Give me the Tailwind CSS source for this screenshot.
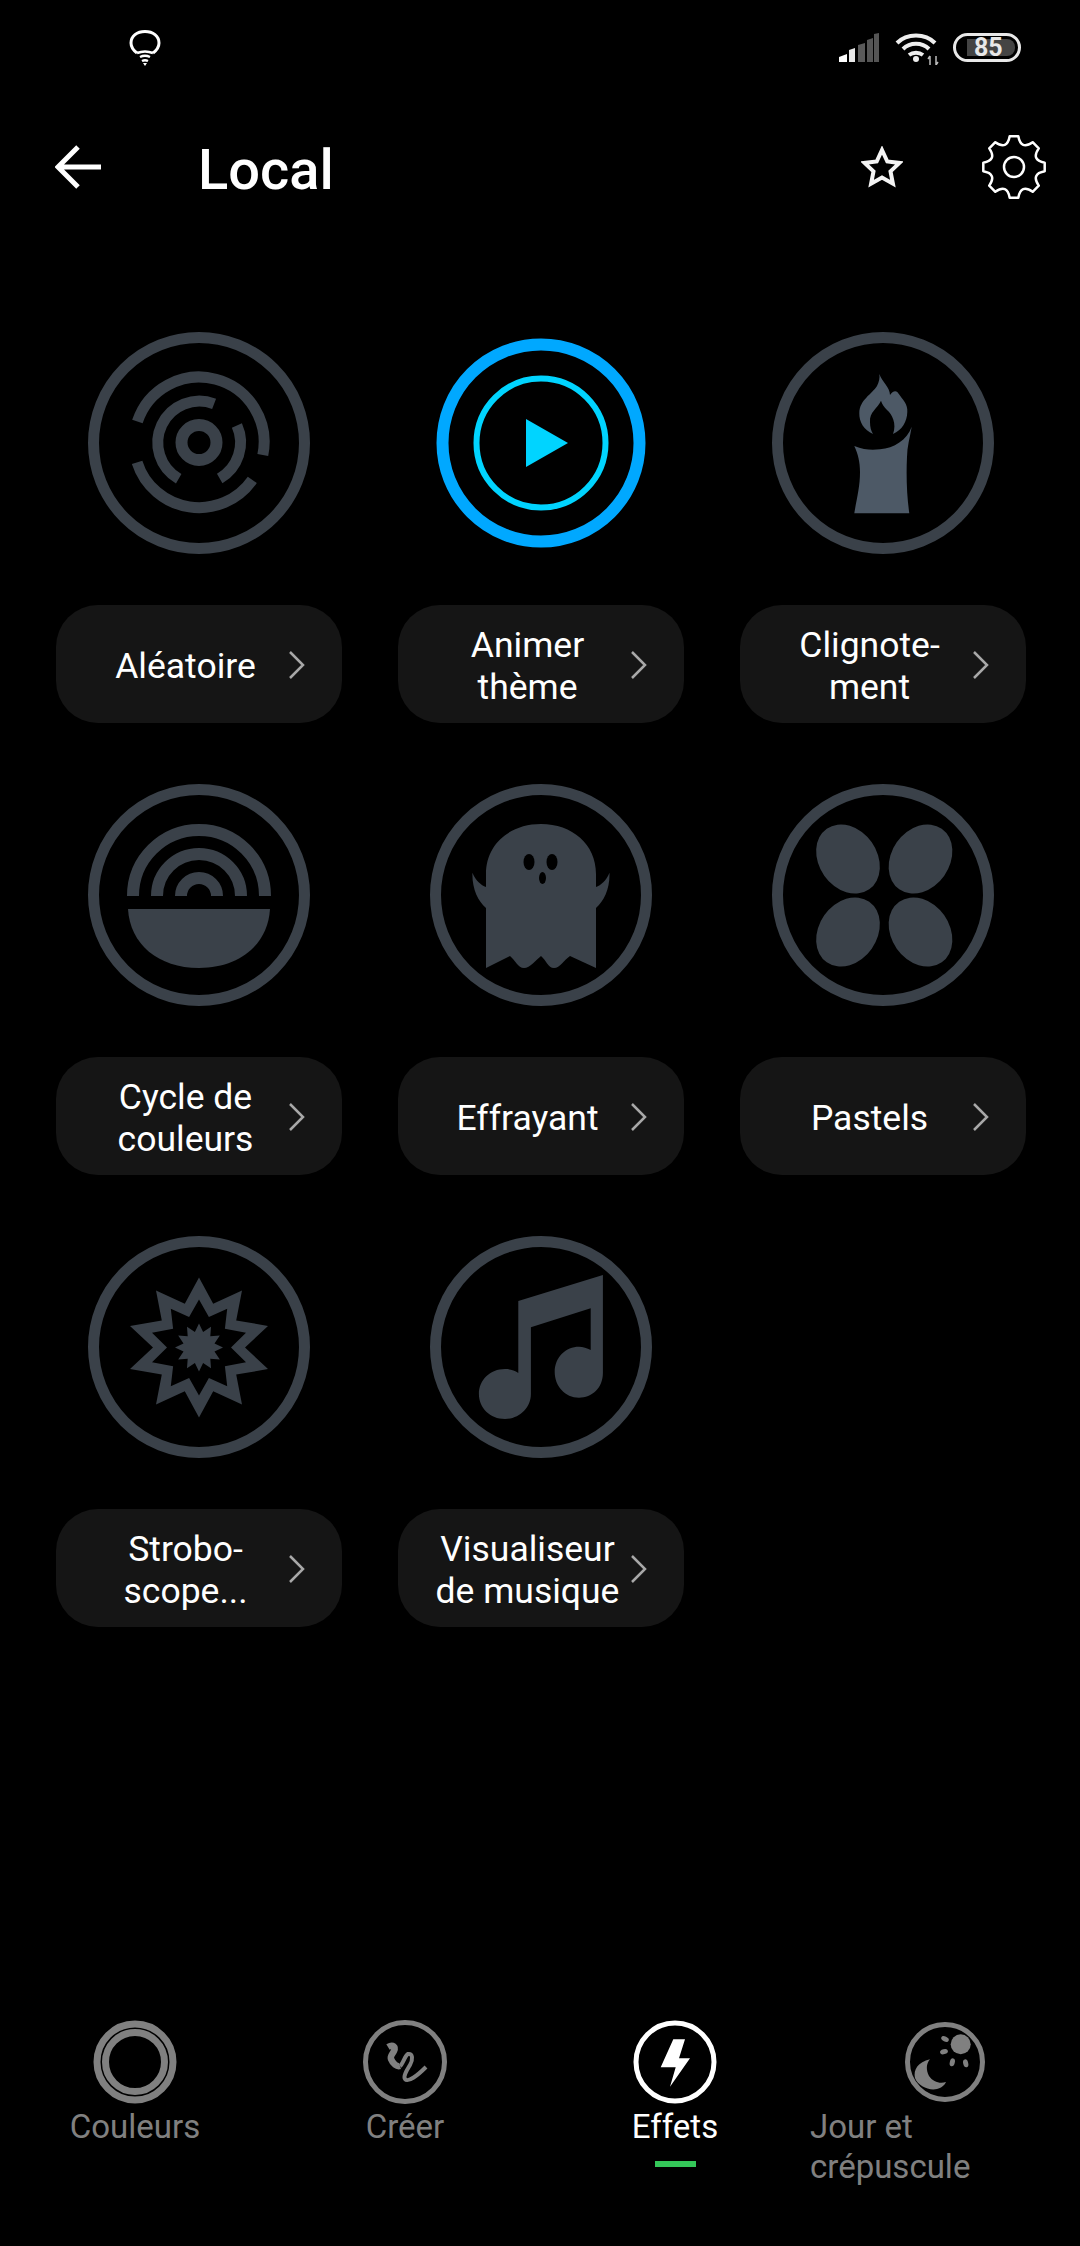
<!DOCTYPE html>
<html lang="fr">
<head>
  <meta charset="UTF-8">
  <meta name="viewport" content="width=device-width, initial-scale=1.0">
  <title>Local</title>
  <script src="https://cdn.jsdelivr.net/npm/@tailwindcss/browser@4"></script>
</head>
<body class="bg-black font-['Roboto',sans-serif] text-white">
  <div class="relative h-[2246px] w-[1080px] overflow-hidden bg-black">

    <!-- status bar -->
    <div class="flex h-[96px] items-start justify-between pl-[129px] pr-[59px] pt-[30px]">
      <svg class="h-[36px] w-[32px]" viewBox="0 0 32 36" fill="none" stroke="#fff">
        <path d="M8 23C4 20 2 17 2 13 2 6 8 1.500 16 1.500S30 6 30 13c0 4-2 7-6 10" stroke-width="3"/>
        <path d="M8 23c5-2 11-2 16 0M11 27c3-1.500 7-1.500 10 0M13 31c2-1 4-1 6 0" stroke-width="2.500"/>
        <path d="M16 33l-2 0 2 3 2-3z" fill="#fff" stroke="none"/>
      </svg>
      <div class="mt-[3px] flex items-start">
        <svg class="h-[29px] w-[42px]" viewBox="0 0 42 29">
          <path d="M0 29v-5l8-3v8z" fill="#fff"/>
          <path d="M10 29V17l6-2v14z" fill="#e8e8e8"/>
          <path d="M19 29V12l7-2v19z" fill="#5a5a5a"/>
          <path d="M28 29V7l6-2v24z" fill="#555"/>
          <path d="M35 29V1l5-1v29z" fill="#555"/>
        </svg>
        <svg class="ml-[14px] h-[32px] w-[44px]" viewBox="0 0 44 32" fill="none" stroke="#eee" stroke-width="4">
          <path d="M2 10C12 0 30 0 40 10"/>
          <path d="M8 16C15 9 27 9 34 16"/>
          <path d="M14 22c4-3 10-3 14 0"/>
          <circle cx="21" cy="26" r="3" fill="#eee" stroke="none"/>
          <path d="M35 23v9M35 23l-2 3M41 23v9M41 32l2-3" stroke="#bbb" stroke-width="1.500"/>
        </svg>
        <div class="ml-[14px] flex h-[29px] w-[68px] items-center rounded-full border-[3px] border-[#e8e8e8] py-[3px] pl-[11px] pr-[3px]">
          <div class="h-full w-full rounded-r-[8px] bg-[#444] pl-[7px] text-[25px] leading-[17px] font-bold text-[#e8e8e8]">85</div>
        </div>
      </div>
    </div>

    <!-- app bar -->
    <div class="flex h-[142px] items-center">
      <svg class="ml-[55px] h-[44px] w-[46px]" viewBox="0 0 46 44" fill="none" stroke="#fff" stroke-width="5">
        <path d="M23 2L3 22l20 20M3 22h43"/>
      </svg>
      <h1 class="ml-[97px] mt-[6px] text-[56px] leading-none font-medium">Local</h1>
      <svg class="ml-auto h-[42px] w-[42px]" viewBox="0 0 42 42" fill="none" stroke="#f4f4f4" stroke-width="4">
        <path d="M21 4l5.300 11.500 12.200 1.400-9 8.500 2.400 12.300L21 31.500l-10.900 6.200 2.400-12.300-9-8.500 12.200-1.400z"/>
      </svg>
      <svg class="mr-[33px] ml-[78px] h-[64px] w-[66px]" viewBox="0 0 66 64" fill="none" stroke="#fff" stroke-width="2.500" stroke-linejoin="round">
        <path d="M28.690 1.300L37.310 1.300Q39.890 15.370 51.660 7.240L57.760 13.340Q49.630 25.110 63.700 27.690L63.700 36.310Q49.630 38.890 57.760 50.660L51.660 56.760Q39.890 48.630 37.310 62.700L28.690 62.700Q26.110 48.630 14.340 56.760L8.240 50.660Q16.370 38.890 2.300 36.310L2.300 27.690Q16.370 25.110 8.240 13.340L14.340 7.240Q26.110 15.370 28.690 1.300Z"/>
        <circle cx="33" cy="32" r="10"/>
      </svg>
    </div>

    <!-- effects grid -->
    <div class="mt-[94px] grid grid-cols-[286px_286px_286px] gap-x-[56px] gap-y-[61px] pl-[56px]">

      <div class="flex flex-col items-center">
        <svg class="h-[222px] w-[222px]" viewBox="0 0 222 222" fill="none" stroke="#3a4149" stroke-width="11">
          <circle cx="111" cy="111" r="105.500"/>
          <circle cx="111" cy="110.500" r="17.500" stroke-width="12"/>
          <path d="M49.400 89.600A65 65 0 0 1 174.800 123"/>
          <path d="M164.300 147.900A65 65 0 0 1 49.100 130.300"/>
          <path d="M126.100 71.900A41.500 41.500 0 0 0 90.700 146.700"/>
          <path d="M148.900 93.400A41.500 41.500 0 0 1 131.700 146.400"/>
        </svg>
        <div class="mt-[51px] flex h-[118px] w-[286px] items-center rounded-[42px] bg-[#151515] pl-[26px]">
          <span class="w-[207px] pt-[4px] text-center text-[35.500px] leading-[42px] text-white">Aléatoire</span>
          <svg class="mt-[2px] h-[28px] w-[16px]" viewBox="0 0 16 28" fill="none" stroke="#a8a8a8" stroke-width="2.500"><path d="M1 1l13 13L1 27"/></svg>
        </div>
      </div>

      <div class="flex flex-col items-center">
        <svg class="h-[222px] w-[222px]" viewBox="0 0 222 222" fill="none">
          <circle cx="111" cy="111" r="98.500" stroke="#00a8ff" stroke-width="12"/>
          <circle cx="111" cy="111" r="64.500" stroke="#00d4ff" stroke-width="6"/>
          <path d="M96 87l42 24-42 24z" fill="#00d4ff"/>
        </svg>
        <div class="mt-[51px] flex h-[118px] w-[286px] items-center rounded-[42px] bg-[#151515] pl-[26px]">
          <span class="w-[207px] pt-[4px] text-center text-[35.500px] leading-[42px] text-white">Animer<br>thème</span>
          <svg class="mt-[2px] h-[28px] w-[16px]" viewBox="0 0 16 28" fill="none" stroke="#a8a8a8" stroke-width="2.500"><path d="M1 1l13 13L1 27"/></svg>
        </div>
      </div>

      <div class="flex flex-col items-center">
        <svg class="h-[222px] w-[222px]" viewBox="0 0 222 222" fill="none">
          <circle cx="111" cy="111" r="105.500" stroke="#3a4149" stroke-width="11"/>
          <path d="M107.300 42C110 50 118 55 118 63C120 60 123 58 125.300 60C131 68 136 72 135.300 80C135 90 130 98 121 102C125 92 120 82 115 78C112 75 110 72 109 68.700C106 76 97 80 98 90C98 95 99 99 101 102C92 98 87 90 87.300 81C87.500 68 100 62 105 54C107 50 108 46 107.300 42Z" fill="#4d5966"/>
          <path d="M82.300 114C92 118 100 118 108 117.300C122 116 135 108 139.700 94.700C138 105 135 115 135 125C134 145 135 165 137.300 181.300H82.300C85 165 88 155 88 140C88 130 86 122 82.300 114Z" fill="#4d5966"/>
        </svg>
        <div class="mt-[51px] flex h-[118px] w-[286px] items-center rounded-[42px] bg-[#151515] pl-[26px]">
          <span class="w-[207px] pt-[4px] text-center text-[35.500px] leading-[42px] text-white">Clignote-<br>ment</span>
          <svg class="mt-[2px] h-[28px] w-[16px]" viewBox="0 0 16 28" fill="none" stroke="#a8a8a8" stroke-width="2.500"><path d="M1 1l13 13L1 27"/></svg>
        </div>
      </div>

      <div class="flex flex-col items-center">
        <svg class="h-[222px] w-[222px]" viewBox="0 0 222 222" fill="none">
          <circle cx="111" cy="111" r="105.500" stroke="#3a4149" stroke-width="11"/>
          <g stroke="#3a4149" stroke-width="12">
            <path d="M45 112a66 66 0 0 1 132 0"/>
            <path d="M69 112a42 42 0 0 1 84 0"/>
            <path d="M93 112a18 18 0 0 1 36 0"/>
          </g>
          <path d="M40 125h142c-2 35-30 59-71 59s-69-24-71-59z" fill="#3a4149"/>
        </svg>
        <div class="mt-[51px] flex h-[118px] w-[286px] items-center rounded-[42px] bg-[#151515] pl-[26px]">
          <span class="w-[207px] pt-[4px] text-center text-[35.500px] leading-[42px] text-white">Cycle de<br>couleurs</span>
          <svg class="mt-[2px] h-[28px] w-[16px]" viewBox="0 0 16 28" fill="none" stroke="#a8a8a8" stroke-width="2.500"><path d="M1 1l13 13L1 27"/></svg>
        </div>
      </div>

      <div class="flex flex-col items-center">
        <svg class="h-[222px] w-[222px]" viewBox="0 0 222 222" fill="none">
          <circle cx="111" cy="111" r="105.500" stroke="#3a4149" stroke-width="11"/>
          <path d="M56 184V124C48 117 42 105 42.400 88.700C46 97 51 101 56 103V90C56 60 80 40 111 40S166 60 166 90V103C171 101 176 97 179.500 88.700C180 105 174 117 166 124V184L140 172C134 176 130 184 124 184C118 184 116 176 111 172C106 176 100 184 94 184C88 184 85 176 80 172Z" fill="#3a4149"/>
          <ellipse cx="99" cy="78" rx="5.500" ry="8" fill="#000"/>
          <ellipse cx="122" cy="78" rx="5.500" ry="8" fill="#000"/>
          <ellipse cx="112.500" cy="94" rx="3.500" ry="6" fill="#000"/>
        </svg>
        <div class="mt-[51px] flex h-[118px] w-[286px] items-center rounded-[42px] bg-[#151515] pl-[26px]">
          <span class="w-[207px] pt-[4px] text-center text-[35.500px] leading-[42px] text-white">Effrayant</span>
          <svg class="mt-[2px] h-[28px] w-[16px]" viewBox="0 0 16 28" fill="none" stroke="#a8a8a8" stroke-width="2.500"><path d="M1 1l13 13L1 27"/></svg>
        </div>
      </div>

      <div class="flex flex-col items-center">
        <svg class="h-[222px] w-[222px]" viewBox="0 0 222 222" fill="#3a4149">
          <circle cx="111" cy="111" r="105.500" fill="none" stroke="#3a4149" stroke-width="11"/>
          <ellipse cx="76" cy="75" rx="29" ry="37" transform="rotate(-35 76 75)"/>
          <ellipse cx="148.500" cy="75" rx="29" ry="37" transform="rotate(35 148.500 75)"/>
          <ellipse cx="76" cy="148" rx="29" ry="37" transform="rotate(35 76 148)"/>
          <ellipse cx="148.500" cy="148" rx="29" ry="37" transform="rotate(-35 148.500 148)"/>
        </svg>
        <div class="mt-[51px] flex h-[118px] w-[286px] items-center rounded-[42px] bg-[#151515] pl-[26px]">
          <span class="w-[207px] pt-[4px] text-center text-[35.500px] leading-[42px] text-white">Pastels</span>
          <svg class="mt-[2px] h-[28px] w-[16px]" viewBox="0 0 16 28" fill="none" stroke="#a8a8a8" stroke-width="2.500"><path d="M1 1l13 13L1 27"/></svg>
        </div>
      </div>

      <div class="flex flex-col items-center">
        <svg class="h-[222px] w-[222px]" viewBox="0 0 222 222" fill="none">
          <circle cx="111" cy="111" r="105.500" stroke="#3a4149" stroke-width="11"/>
          <g transform="translate(111 111.500)">
            <polygon fill="#3a4149" points="0,-70 14.200,-43.700 43,-57 37.200,-27 69,-21.600 46,0 69,21.600 37.200,27 43,57 14.200,43.700 0,70 -14.200,43.700 -43,57 -37.200,27 -69,21.600 -46,0 -69,-21.600 -37.200,-27 -43,-57 -14.200,-43.700"/>
            <polygon fill="#000" points="0,-48 9.900,-30.400 28.200,-38.800 25.900,-18.800 47,-14.800 32,0 47,14.800 25.900,18.800 28.200,38.800 9.900,30.400 0,48 -9.900,30.400 -28.200,38.800 -25.900,18.800 -47,14.800 -32,0 -47,-14.800 -25.900,-18.800 -28.200,-38.800 -9.900,-30.400"/>
            <polygon fill="#3a4149" points="0,-24 4.100,-15.500 12,-20.800 11.300,-11.300 20.800,-12 15.500,-4.100 24,0 15.500,4.100 20.800,12 11.300,11.300 12,20.800 4.100,15.500 0,24 -4.100,15.500 -12,20.800 -11.300,11.300 -20.800,12 -15.500,4.100 -24,0 -15.500,-4.100 -20.800,-12 -11.300,-11.300 -12,-20.800 -4.100,-15.500"/>
          </g>
        </svg>
        <div class="mt-[51px] flex h-[118px] w-[286px] items-center rounded-[42px] bg-[#151515] pl-[26px]">
          <span class="w-[207px] pt-[4px] text-center text-[35.500px] leading-[42px] text-white">Strobo-<br>scope...</span>
          <svg class="mt-[2px] h-[28px] w-[16px]" viewBox="0 0 16 28" fill="none" stroke="#a8a8a8" stroke-width="2.500"><path d="M1 1l13 13L1 27"/></svg>
        </div>
      </div>

      <div class="flex flex-col items-center">
        <svg class="h-[222px] w-[222px]" viewBox="0 0 222 222" fill="none">
          <circle cx="111" cy="111" r="105.500" stroke="#3a4149" stroke-width="11"/>
          <path d="M88.300 65L172.900 39V137C172.900 152 162 161.700 149 161.700C135 161.700 124.700 150 124.700 136C124.700 121 136 110.700 149 110.700C153 110.700 157 112 160.700 114V72.300L100.900 91.300V158C100.900 172 89 183 75 183C60 183 48.900 172 48.900 158C48.900 144 60 133 75 133C80 133 84.500 134 88.300 137Z" fill="#3a4149"/>
        </svg>
        <div class="mt-[51px] flex h-[118px] w-[286px] items-center rounded-[42px] bg-[#151515] pl-[26px]">
          <span class="w-[207px] pt-[4px] text-center text-[35.500px] leading-[42px] text-white">Visualiseur<br>de musique</span>
          <svg class="mt-[2px] h-[28px] w-[16px]" viewBox="0 0 16 28" fill="none" stroke="#a8a8a8" stroke-width="2.500"><path d="M1 1l13 13L1 27"/></svg>
        </div>
      </div>
    </div>

    <!-- bottom tabs -->
    <div class="absolute top-[2020px] left-0 grid h-[170px] w-[1080px] grid-cols-[270px_270px_270px_270px] text-[33px] leading-[40px] text-[#808080]">
      <div class="flex flex-col items-center">
        <svg class="h-[84px] w-[84px]" viewBox="0 0 84 84" fill="none" stroke="#808080" stroke-width="7">
          <circle cx="42" cy="42" r="38"/>
          <circle cx="42" cy="42" r="29.500"/>
        </svg>
        <span class="mt-[3px]">Couleurs</span>
      </div>
      <div class="flex flex-col items-center">
        <svg class="h-[84px] w-[84px]" viewBox="0 0 84 84" fill="none" stroke="#808080">
          <circle cx="42" cy="42" r="39.500" stroke-width="5"/>
          <path d="M25 27C30 24 33 27 31 31C29 35 27 36 28 39C30 44 34 47 37 46" stroke-width="6.500"/>
          <path d="M37 46C40 44 42 35 45 34C50 33 50 40 47 45C44 50 40 56 42 59C45 63 55 55 63 47" stroke-width="4"/>
        </svg>
        <span class="mt-[3px]">Créer</span>
      </div>
      <div class="flex flex-col items-center text-white">
        <svg class="h-[84px] w-[84px]" viewBox="0 0 84 84" fill="none">
          <circle cx="42" cy="42" r="39" stroke="#fff" stroke-width="5"/>
          <polygon points="40.300,19.300 52,19.300 46,38.300 57,38.300 37,66.700 42.700,47.300 27.700,47.300" fill="#fff"/>
        </svg>
        <span class="mt-[3px]">Effets</span>
        <div class="mt-[14px] h-[6px] w-[41px] bg-[#34c759]"></div>
      </div>
      <div class="flex flex-col items-start">
        <svg class="ml-[95px] h-[84px] w-[84px]" viewBox="0 0 84 84" fill="none" stroke="#808080">
          <circle cx="40" cy="42" r="37.500" stroke-width="5"/>
          <g fill="#808080" stroke="none">
            <circle cx="55.700" cy="24.300" r="10"/>
            <ellipse cx="40" cy="19" rx="4" ry="2.500" transform="rotate(25 40 19)"/>
            <ellipse cx="39" cy="31.700" rx="4" ry="2.500" transform="rotate(-15 39 31.700)"/>
            <ellipse cx="47.300" cy="42.300" rx="2.500" ry="4" transform="rotate(15 47.300 42.300)"/>
            <ellipse cx="60.700" cy="43.300" rx="2.500" ry="4" transform="rotate(-15 60.700 43.300)"/>
            <path d="M25 39.300C13 42 8 50 10 58C13 66 24 71 32 69C36 68 40 65 41 62C35 64 28 62 24 56C21 50 21 44 25 39.300Z"/>
          </g>
        </svg>
        <span class="mt-[3px] w-[180px]">Jour et crépuscule</span>
      </div>
    </div>
  </div>
</body>
</html>
